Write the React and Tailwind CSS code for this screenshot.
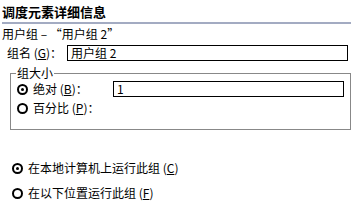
import React from 'react';

const Radio = ({ checked }) => (
  <span className="w-[11px] h-[11px] rounded-full border-2 border-black flex items-center justify-center shrink-0 bg-white">
    {checked && <span className="w-[3px] h-[3px] rounded-full bg-black" />}
  </span>
);

const Key = ({ k }) => (
  <span>(<span className="underline underline-offset-1">{k}</span>)</span>
);

export default function App() {
  return (
    <div className="w-[355px] h-[206px] bg-white text-black text-[12px] leading-none overflow-hidden font-['Noto_Sans_CJK_SC',sans-serif]">
      <div className="pl-[2px] pr-[4px] pt-[5px]">
        <div className="font-bold text-[13px] leading-[13px] h-[15px]">调度元素详细信息</div>
        <div className="mt-[2px] h-[2px] bg-[#a3abc2]" />
      </div>
      <div className="pl-[2px] mt-[4px] h-[12px] leading-[12px]">用户组 – “用户组 2”</div>

      <div className="flex items-center mt-[5px] pl-[7px] h-[16px]">
        <span className="w-[60px] leading-[12px]">组名 <Key k="G" />：</span>
        <div className="w-[281px] h-[16px] border border-black flex items-center pl-[3px] leading-[12px]">用户组 2</div>
      </div>

      <fieldset className="ml-[10px] mt-[6px] w-[334px] h-[63px] border border-[#888] px-[6px] pt-0 pb-0">
        <legend className="px-[1px] -ml-[1px] leading-[12px]">组大小</legend>
        <div className="flex items-center mt-[2px] h-[16px]">
          <Radio checked />
          <span className="ml-[5px] w-[80px] leading-[12px]">绝对 <Key k="B" />：</span>
          <div className="w-[231px] h-[16px] border border-black flex items-center pl-[3px] leading-[12px]">1</div>
        </div>
        <div className="flex items-center mt-[5px] h-[12px]">
          <Radio />
          <span className="ml-[5px] leading-[12px]">百分比 <Key k="P" />：</span>
        </div>
      </fieldset>

      <div className="flex items-center mt-[32px] pl-[12px] h-[12px]">
        <Radio checked />
        <span className="ml-[5px] leading-[12px]">在本地计算机上运行此组 <Key k="C" /></span>
      </div>
      <div className="flex items-center mt-[13px] pl-[12px] h-[12px]">
        <Radio />
        <span className="ml-[5px] leading-[12px]">在以下位置运行此组 <Key k="F" /></span>
      </div>
    </div>
  );
}
